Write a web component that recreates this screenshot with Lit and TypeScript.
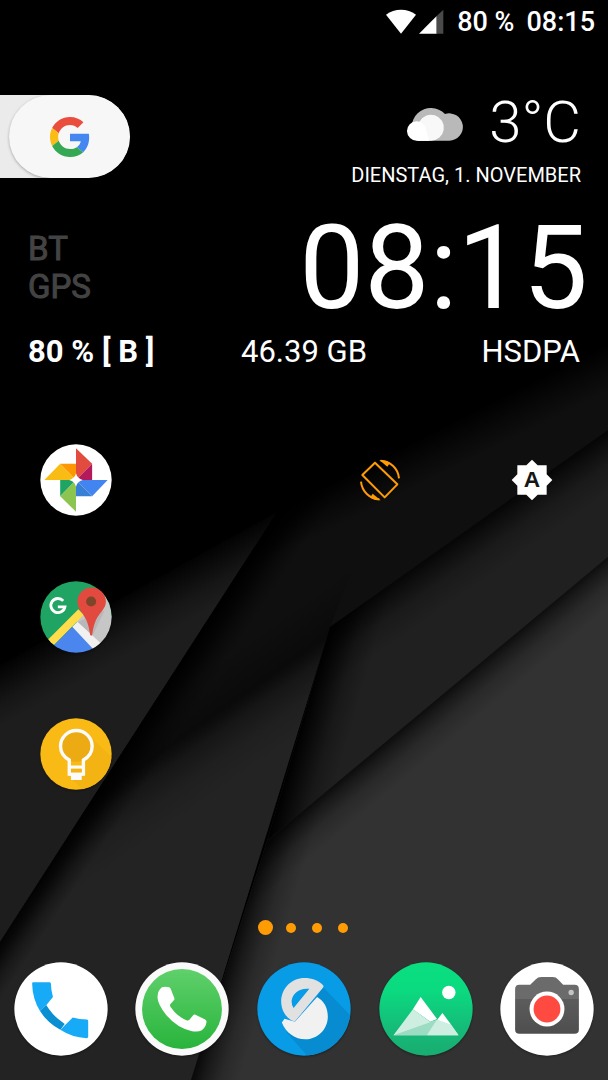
import { LitElement, html, css } from "lit";
import { customElement, state } from "lit/decorators.js";

const wallpaper = html`
  <svg class="wallpaper" viewBox="0 0 608 1080" preserveAspectRatio="none" aria-hidden="true">
    <defs>
      <linearGradient id="left" gradientUnits="userSpaceOnUse" x1="136" y1="585" x2="164" y2="635">
        <stop offset="0" stop-color="#000" />
        <stop offset=".3" stop-color="#0a0a0a" />
        <stop offset=".65" stop-color="#161616" />
        <stop offset="1" stop-color="#1d1d1d" />
      </linearGradient>
      <linearGradient id="band" gradientUnits="userSpaceOnUse" x1="380" y1="458" x2="399" y2="496">
        <stop offset="0" stop-color="#000" />
        <stop offset=".5" stop-color="#080808" />
        <stop offset="1" stop-color="#0f0f0f" />
      </linearGradient>
      <linearGradient id="middle-shade" gradientUnits="userSpaceOnUse" x1="206" y1="669" x2="235" y2="710">
        <stop offset="0" stop-color="#000" stop-opacity="0" />
        <stop offset="1" stop-color="#000" stop-opacity=".4" />
      </linearGradient>
      <linearGradient id="middle" gradientUnits="userSpaceOnUse" x1="231" y1="704" x2="268" y2="757">
        <stop offset="0" stop-color="#232323" stop-opacity="0" />
        <stop offset=".25" stop-color="#232323" stop-opacity=".5" />
        <stop offset=".6" stop-color="#232323" stop-opacity=".85" />
        <stop offset="1" stop-color="#232323" />
      </linearGradient>
      <linearGradient id="middle-edge" gradientUnits="userSpaceOnUse" x1="138" y1="728" x2="168" y2="748">
        <stop offset="0" stop-color="#000" />
        <stop offset=".3" stop-color="#000" stop-opacity=".75" />
        <stop offset=".65" stop-color="#000" stop-opacity=".3" />
        <stop offset="1" stop-color="#000" stop-opacity="0" />
      </linearGradient>
      <linearGradient id="right-top" gradientUnits="userSpaceOnUse" x1="469" y1="527" x2="499" y2="570">
        <stop offset="0" stop-color="#000" stop-opacity=".85" />
        <stop offset=".2" stop-color="#000" stop-opacity=".6" />
        <stop offset=".55" stop-color="#000" stop-opacity=".2" />
        <stop offset="1" stop-color="#000" stop-opacity="0" />
      </linearGradient>
      <linearGradient id="right-left" gradientUnits="userSpaceOnUse" x1="298" y1="734" x2="346" y2="748">
        <stop offset="0" stop-color="#000" />
        <stop offset=".25" stop-color="#000" stop-opacity=".7" />
        <stop offset=".6" stop-color="#000" stop-opacity=".25" />
        <stop offset="1" stop-color="#000" stop-opacity="0" />
      </linearGradient>
      <linearGradient id="front-top" gradientUnits="userSpaceOnUse" x1="437" y1="699" x2="463" y2="730">
        <stop offset="0" stop-color="#000" stop-opacity=".75" />
        <stop offset=".2" stop-color="#000" stop-opacity=".5" />
        <stop offset=".55" stop-color="#000" stop-opacity=".18" />
        <stop offset="1" stop-color="#000" stop-opacity="0" />
      </linearGradient>
      <linearGradient id="front-left" gradientUnits="userSpaceOnUse" x1="229" y1="960" x2="272" y2="973">
        <stop offset="0" stop-color="#000" stop-opacity=".8" />
        <stop offset=".25" stop-color="#000" stop-opacity=".5" />
        <stop offset=".6" stop-color="#000" stop-opacity=".18" />
        <stop offset="1" stop-color="#000" stop-opacity="0" />
      </linearGradient>
    </defs>
    <rect width="608" height="1080" fill="#000" />
    <path d="M0 665L277 512L0 942z" fill="url(#left)" />
    <path d="M277 512L608 344V430L330 627L191 1080H0V942z" fill="url(#band)" />
    <path d="M277 512L400 450L330 627L191 1080H0V942z" fill="url(#middle-shade)" />
    <path d="M277 512L330 627L191 1080H0V942z" fill="url(#middle)" />
    <path d="M277 512L440 430L330 627L191 1080H0V942z" fill="url(#middle-edge)" />
    <path d="M330 627L608 430V557L267 841z" fill="#202020" />
    <path d="M330 627L608 430V557L267 841z" fill="url(#right-top)" />
    <path d="M330 627L608 430V557L267 841z" fill="url(#right-left)" />
    <path d="M267 841L608 557V1080H191z" fill="#323232" />
    <path d="M267 841L608 557V1080H191z" fill="url(#front-top)" />
    <path d="M267 841L608 557V1080H191z" fill="url(#front-left)" />
  </svg>
`;

const googleLogo = html`
  <svg class="google" viewBox="0 0 48 48" aria-hidden="true">
    <path fill="#ea4c3d" d="M24 9.5c3.54 0 6.71 1.22 9.21 3.6l6.85-6.85C35.9 2.38 30.47 0 24 0 14.62 0 6.51 5.38 2.56 13.22l7.98 6.19C12.43 13.72 17.74 9.5 24 9.5z" />
    <path fill="#4587f0" d="M46.98 24.55c0-1.57-.15-3.09-.38-4.55H24v9.02h12.94c-.58 2.96-2.26 5.48-4.78 7.18l7.73 6c4.51-4.18 7.09-10.36 7.09-17.65z" />
    <path fill="#fbbc15" d="M10.53 28.59c-.48-1.45-.76-2.99-.76-4.59s.27-3.14.76-4.59l-7.98-6.19C.92 16.46 0 20.12 0 24c0 3.88.92 7.54 2.56 10.78l7.97-6.19z" />
    <path fill="#35a853" d="M24 48c6.48 0 11.93-2.13 15.89-5.81l-7.73-6c-2.15 1.45-4.92 2.3-8.16 2.3-6.26 0-11.57-4.22-13.47-9.91l-7.98 6.19C6.51 42.62 14.62 48 24 48z" />
  </svg>
`;

const photosIcon = html`
  <svg class="app-icon" viewBox="60 40 214 214" aria-hidden="true">
    <circle cx="167" cy="147" r="106" fill="#fff" />
    <path fill="#e24c3f" d="M167 53L215 99L167 147z" />
    <path fill="#b3195b" d="M215 99V147H167z" />
    <path fill="#f9bc15" d="M73 147L120 99L167 147z" />
    <path fill="#ff9800" d="M120 99H167V147z" />
    <path fill="#4385f0" d="M261 147L215 195L167 147z" />
    <path fill="#3780d6" d="M215 195H167V147z" />
    <path fill="#1fa463" d="M120 147H167L120 195z" />
    <path fill="#8cc450" d="M120 195L167 147V241z" />
    <path fill="#fff" d="M167 127Q171 143 187 147Q171 151 167 167Q163 151 147 147Q163 143 167 127z" />
  </svg>
`;

const mapsIcon = html`
  <svg class="app-icon" viewBox="60 452 214 214" aria-hidden="true">
    <clipPath id="maps-disc"><circle cx="167" cy="559" r="106" /></clipPath>
    <g clip-path="url(#maps-disc)">
      <path fill="#1fa463" d="M60 452H274V560L90 666H60z" />
      <path fill="#c6c6c6" d="M165 567L260 470L280 600L230 645z" />
      <path fill="#a9a9a9" d="M172 574L252 540L216 614z" opacity=".5" />
      <path fill="#ffdd4a" d="M82 628L174 536L190 552L98 646z" />
      <path fill="#4a86ee" d="M98 646L156 588L230 660L200 670H98z" />
      <path fill="#f1f1f1" d="M156 588L171 573L240 636L220 656z" />
    </g>
    <path fill="none" stroke="#fff" stroke-width="8.5" d="M129 511A21 21 0 1 0 134 529H113" />
    <path fill="#e24a3f" d="M213 471C189 471 171 490 171 513C171 535 187 545 198 569C205 586 207 599 209 612Q212 617 215 612C217 599 219 586 226 569C237 545 256 535 256 513C256 490 237 471 213 471z" />
    <circle cx="212" cy="513" r="15" fill="#7d4628" />
  </svg>
`;

const keepIcon = html`
  <svg class="app-icon" viewBox="60 53 214 214" aria-hidden="true">
    <clipPath id="keep-disc"><circle cx="167" cy="160" r="106" /></clipPath>
    <circle cx="167" cy="160" r="106" fill="#f9ba15" />
    <path clip-path="url(#keep-disc)" fill="#f3b413" d="M203 102L280 175V270H190L155 235L195 175z" />
    <circle cx="168" cy="137" r="46" fill="#ecab13" />
    <path fill="none" stroke="#fbfbfb" stroke-width="10" d="M147 220V178C131 169 121 154 121 137A47 47 0 0 1 215 137C215 154 205 169 189 178V220z" />
    <path fill="#fbfbfb" d="M147 194H189V204H147zM147 214H189V225H184V237H152V225H147z" />
    <path fill="#f4b514" d="M152 204H184V215H152z" />
  </svg>
`;

const rotateIcon = html`
  <svg class="toggle-icon" viewBox="57 55 126 126" aria-hidden="true">
    <g fill="none" stroke="#ff9b05" stroke-width="6">
      <path stroke-linejoin="round" d="M105 66L172 131L134 170L67 103z" />
      <path d="M177 113A58 58 0 0 0 122 60" />
      <path d="M63 123A58 58 0 0 0 118 176" />
    </g>
    <path fill="#ff9b05" d="M118 58Q134 57 150 66L142 78z" />
    <path fill="#ff9b05" d="M122 179Q106 180 90 171L98 159z" />
  </svg>
`;

const brightnessIcon = html`
  <svg class="toggle-icon" viewBox="513 55 126 126" aria-hidden="true">
    <path fill="#fff" d="M576 57L593 74H620V101L637 118L620 135V162H593L576 179L559 162H532V135L515 118L532 101V74H559z" />
    <text class="auto" x="576" y="140">A</text>
  </svg>
`;

const phoneIcon = html`
  <svg class="dock-icon" viewBox="42 187 280 280" aria-hidden="true">
    <circle cx="182" cy="327" r="139" fill="#fff" />
    <path fill="#0a8fd3" d="M119 332L138 315Q158 348 193 372L180 389Q141 368 119 332z" />
    <path fill="#17aaf6" d="M99 247H148Q152 247 152 252Q152 270 158 291L138 316L119 332Q97 297 96 251Q96 247 99 247z" />
    <path fill="#17aaf6" d="M180 389L217 352Q237 358 259 358Q263 358 263 363V410Q263 414 258 414Q215 412 180 389z" />
  </svg>
`;

const whatsappIcon = html`
  <svg class="dock-icon" viewBox="407 187 280 280" aria-hidden="true">
    <linearGradient id="wa" x1="0" y1="0" x2="0" y2="1">
      <stop offset="0" stop-color="#60d06b" />
      <stop offset="1" stop-color="#28b43c" />
    </linearGradient>
    <circle cx="547" cy="327" r="139" fill="#fafafa" />
    <circle cx="547" cy="327" r="119" fill="url(#wa)" />
    <path fill="#fff" d="M487 262Q498 259 509 262Q513 264 515 271L524 294Q526 298 522 302L512 313Q510 317 513 321Q534 351 562 361Q566 362 569 359L579 347Q582 342 587 344L616 358Q621 361 620 366Q618 382 606 390Q595 396 577 393Q534 385 500 345Q475 314 474 293Q474 272 487 262z" />
  </svg>
`;

const solidIcon = html`
  <svg class="dock-icon" viewBox="22 21 280 280" aria-hidden="true">
    <clipPath id="solid-disc"><circle cx="162" cy="161" r="139" /></clipPath>
    <circle cx="162" cy="161" r="139" fill="#089be6" />
    <path clip-path="url(#solid-disc)" fill="#078cd1" d="M219 96L310 190V310H180L110 230L160 180z" />
    <path fill="#f1f1f1" d="M96 201L104 190L135 199L201 125C222 137 233 158 233 183C233 222 202 251 166 251C136 251 108 232 96 201z" />
    <path fill="#e1e1e1" fill-rule="evenodd" d="M219 97L134 199C109 190 94 166 94 139C94 100 125 69 164 69C185 69 205 76 219 90Q221 93 219 97zM178 101C150 97 128 113 125 137Q125 150 131 158z" />
  </svg>
`;

const galleryIcon = html`
  <svg class="dock-icon" viewBox="225 187 280 280" aria-hidden="true">
    <linearGradient id="hills" x1="0" y1="0" x2="0" y2="1">
      <stop offset="0" stop-color="#09df80" />
      <stop offset=".3" stop-color="#0bda80" />
      <stop offset=".75" stop-color="#16b878" />
      <stop offset="1" stop-color="#18ad70" />
    </linearGradient>
    <circle cx="365" cy="327" r="139" fill="url(#hills)" />
    <circle cx="433" cy="278" r="20" fill="#fff" />
    <path fill="#cfeee2" d="M268 405L326 328L378 366L398 360L432 364L462 405z" />
    <path fill="#fff" d="M349 291L398 357L378 365L326 328z" />
    <path fill="#fff" d="M414 339L440 374L398 360z" />
    <path fill="#9bdcc2" d="M268 405L398 359L368 405z" />
    <path fill="#cfeee2" d="M398 359L440 374L462 405H368z" />
  </svg>
`;

const cameraIcon = html`
  <svg class="dock-icon" viewBox="590 187 280 280" aria-hidden="true">
    <linearGradient id="body" x1="0" y1="0" x2="0" y2="1">
      <stop offset="0" stop-color="#5c5c5c" />
      <stop offset="1" stop-color="#4e4e4e" />
    </linearGradient>
    <circle cx="730" cy="327" r="139" fill="#fff" />
    <path fill="#6b6b6b" d="M635 298V268Q635 255 648 255H680L696 239Q703 232 713 232H747Q757 232 763 239L778 255H812Q825 255 825 268V298z" />
    <path fill="url(#body)" d="M635 297H825V388Q825 401 812 401H648Q635 401 635 388z" />
    <circle cx="802" cy="278" r="8" fill="#c4c4c4" />
    <circle cx="730" cy="327" r="52" fill="#fff" />
    <circle cx="730" cy="327" r="40" fill="#ff4a42" />
  </svg>
`;

const shortcuts = [
  { name: "Fotos", icon: photosIcon },
  { name: "Maps", icon: mapsIcon },
  { name: "Notizen", icon: keepIcon },
];

const dock = [
  { name: "Telefon", icon: phoneIcon },
  { name: "WhatsApp", icon: whatsappIcon },
  { name: "Solid Explorer", icon: solidIcon },
  { name: "Galerie", icon: galleryIcon },
  { name: "Kamera", icon: cameraIcon },
];

@customElement("app-root")
export class AppRoot extends LitElement {
  @state() private page = 0;

  static styles = css`
    :host {
      display: flex;
      flex-direction: column;
      position: relative;
      min-height: 100vh;
      overflow: hidden;
      background: #000;
      color: #fff;
      font-family: Roboto, "Liberation Sans", sans-serif;
    }
    .wallpaper {
      position: absolute;
      inset: 0;
      width: 100%;
      height: 100%;
    }
    header,
    main,
    nav,
    footer {
      position: relative;
    }
    button {
      border: 0;
      padding: 0;
      background: none;
      cursor: pointer;
    }
    svg {
      display: block;
    }
    .status {
      display: flex;
      justify-content: flex-end;
      align-items: center;
      height: 43px;
      padding-right: 13px;
      font-size: 27px;
      font-weight: 500;
    }
    .signals {
      width: 58px;
      height: 26px;
      margin-right: 13px;
    }
    .status time {
      margin-left: 12px;
    }
    main {
      display: flex;
      flex-direction: column;
      padding-top: 52px;
    }
    .top,
    .clock-row {
      display: flex;
      justify-content: space-between;
    }
    .top {
      padding-right: 27px;
    }
    .search {
      display: flex;
      justify-content: flex-end;
      width: 130px;
      height: 83px;
      overflow: hidden;
      border-radius: 0 42px 42px 0;
      background: #ebebeb;
    }
    .pill {
      display: flex;
      align-items: center;
      justify-content: center;
      width: 121px;
      height: 83px;
      border-radius: 42px;
      background: #f7f7f7;
      box-shadow: 0 1px 3px rgba(0, 0, 0, 0.3);
    }
    .google {
      width: 40px;
      height: 40px;
    }
    .weather {
      display: flex;
      align-items: center;
      justify-content: flex-end;
      gap: 24px;
      font-size: 58px;
      font-weight: 300;
      line-height: 54px;
    }
    .cloud {
      width: 58px;
      height: 40px;
    }
    .date {
      margin-top: 9px;
      text-align: right;
      font-size: 20px;
      line-height: 34px;
    }
    .clock-row {
      align-items: center;
      margin-top: 18px;
      padding: 0 20px 0 28px;
    }
    .radios {
      margin: 0;
      padding: 0;
      list-style: none;
      color: #434343;
      font-size: 33px;
      line-height: 38px;
      -webkit-text-stroke: 1px #434343;
    }
    .clock {
      font-size: 116px;
      line-height: 116px;
    }
    .facts {
      display: grid;
      grid-template-columns: 1fr auto 1fr;
      margin-top: 7px;
      padding: 0 28px;
      font-size: 31px;
      line-height: 38px;
    }
    .battery {
      font-weight: 700;
    }
    .network {
      text-align: right;
    }
    .home {
      display: grid;
      grid-template-columns: repeat(4, 1fr);
      grid-template-rows: repeat(3, 137px);
      place-items: center;
      margin-top: 40px;
    }
    .launcher {
      grid-column: 1;
    }
    .rotate {
      grid-area: 1 / 3;
    }
    .brightness {
      grid-area: 1 / 4;
    }
    .app-icon {
      width: 72px;
      height: 72px;
    }
    .toggle-icon {
      width: 42px;
      height: 42px;
    }
    .auto {
      fill: #161616;
      font-size: 68px;
      font-weight: 700;
      text-anchor: middle;
    }
    .pages {
      display: flex;
      justify-content: center;
      margin: auto 0 26px;
    }
    .page {
      display: grid;
      place-items: center;
      width: 26px;
      height: 17px;
    }
    .dot {
      width: 10px;
      height: 10px;
      border-radius: 50%;
      background: #ff9b05;
    }
    .dot.current {
      width: 15px;
      height: 15px;
    }
    .dock {
      display: grid;
      grid-template-columns: repeat(5, 1fr);
      place-items: center;
      padding-bottom: 24px;
    }
    .dock-icon {
      width: 94px;
      height: 94px;
    }
    .dock-icon,
    .app-icon {
      filter: drop-shadow(0 1px 1px rgba(0, 0, 0, 0.35));
    }
  `;

  render() {
    return html`
      ${wallpaper}
      <header class="status">
        <svg class="signals" viewBox="248 22 174 78" aria-hidden="true">
          <path fill="#fff" d="M248 39Q268 24 293 24Q318 24 338 39L293 96z" />
          <path fill="#fff" d="M347 96L400 43V96z" />
          <path fill="#4a4a4a" d="M400 43L420 24V96H400z" />
        </svg>
        <span>80 %</span>
        <time>08:15</time>
      </header>
      <main>
        <section class="top">
          <button class="search" aria-label="Google"><span class="pill">${googleLogo}</span></button>
          <div>
            <div class="weather">
              <svg class="cloud" viewBox="308 307 174 120" aria-hidden="true">
                <path fill="#b9b9b9" d="M338 423A54 54 0 1 1 422 343A41 41 0 1 1 435 423z" />
                <path fill="#f8f8f8" d="M340 423L345 366A39 39 0 1 1 380 423z" />
                <path fill="#fff" d="M338 423A29 29 0 1 1 366 394L375 423z" />
              </svg>
              <span>3°C</span>
            </div>
            <div class="date">DIENSTAG, 1. NOVEMBER</div>
          </div>
        </section>
        <section class="clock-row">
          <ul class="radios">
            <li>BT</li>
            <li>GPS</li>
          </ul>
          <time class="clock">08:15</time>
        </section>
        <section class="facts">
          <span class="battery">80 % [ B ]</span>
          <span>46.39 GB</span>
          <span class="network">HSDPA</span>
        </section>
        <section class="home">
          ${shortcuts.map((s) => html`<button class="launcher" aria-label=${s.name}>${s.icon}</button>`)}
          <button class="rotate" aria-label="Automatisch drehen">${rotateIcon}</button>
          <button class="brightness" aria-label="Automatische Helligkeit">${brightnessIcon}</button>
        </section>
      </main>
      <nav class="pages">
        ${[0, 1, 2, 3].map(
          (i) => html`<button class="page" aria-label="Seite ${i + 1}" @click=${() => (this.page = i)}>
            <span class="dot ${i === this.page ? "current" : ""}"></span>
          </button>`
        )}
      </nav>
      <footer class="dock">
        ${dock.map((d) => html`<button aria-label=${d.name}>${d.icon}</button>`)}
      </footer>
    `;
  }
}
